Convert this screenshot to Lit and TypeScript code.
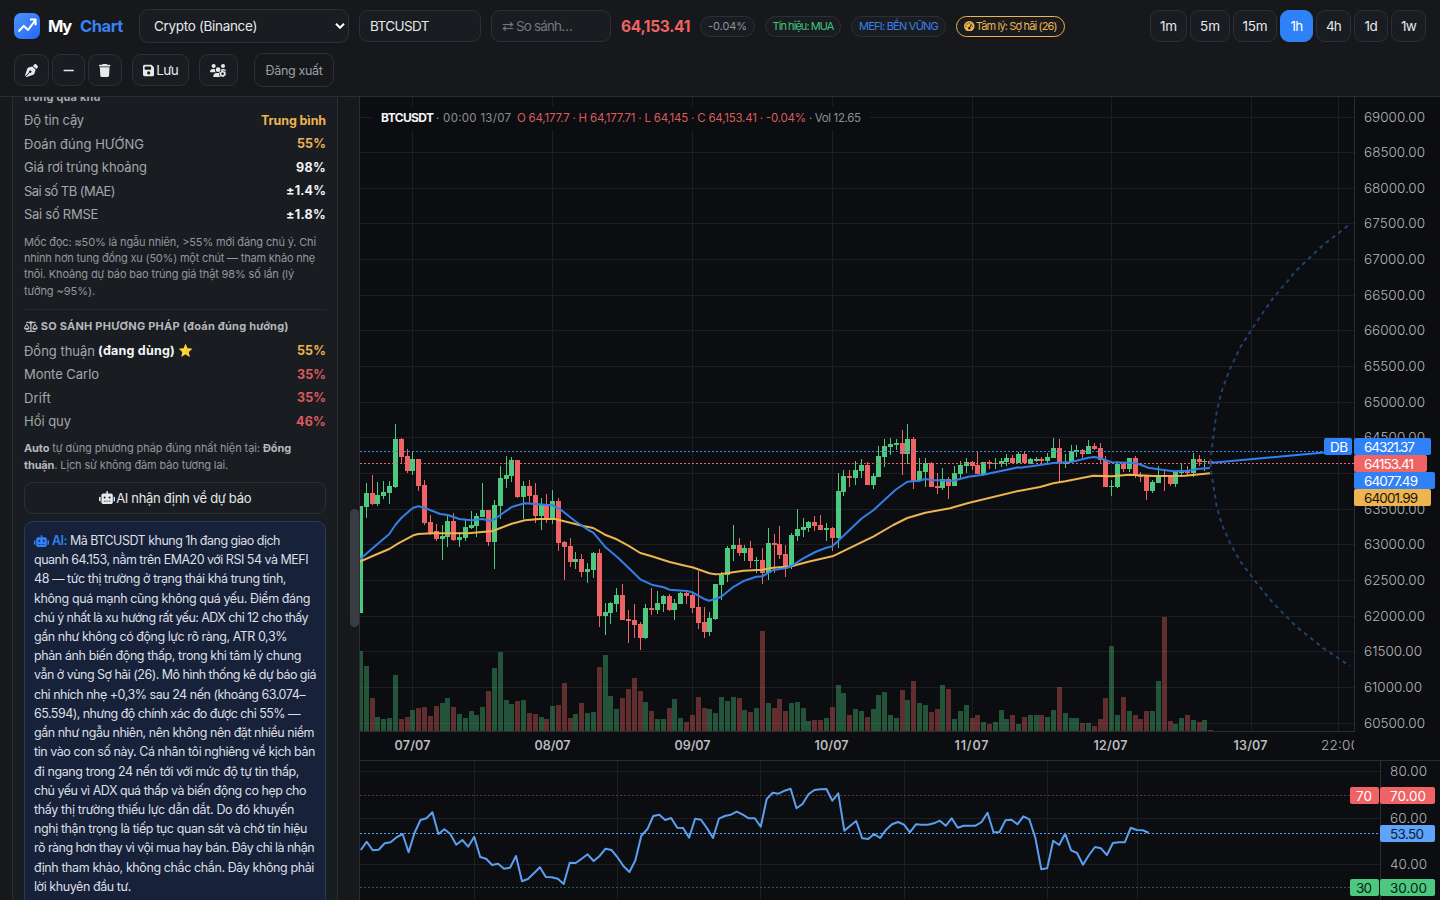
import { LitElement, html, svg, css } from 'lit';
import { customElement, property } from 'lit/decorators.js';

// direction, high, body top, body bottom, low, volume top (thirds of a pixel below y = 400)
const CANDLES = `
g318,318,638,638,753 g249,279,321,354,798 r225,279,311,315,894 g246,285,312,318,951 g243,276,288,297,957
g243,258,279,312,954 g72,117,261,264,825 r114,117,171,189,957 r147,168,213,219,951 g156,177,213,225,930
r177,177,258,273,924 r240,255,369,375,921 r345,366,399,405,948 r372,393,417,423,918 g375,408,417,480,909
g345,363,411,441,894 r339,363,420,423,921 g396,411,420,441,942 g360,381,414,423,954 g333,375,384,387,933
g339,348,378,411,945 g249,330,351,351,921 r330,330,426,438,873 g300,315,426,507,804 g198,234,318,357,756
g168,225,237,264,900 g171,180,228,246,912 r180,180,291,294,903 g243,258,291,357,900 r240,258,288,309,939
r249,285,348,369,942 g294,312,348,390,951 r282,312,357,369,957 g270,303,357,372,918 r294,303,429,453,915
r423,426,441,540,849 r414,438,486,501,954 g456,477,486,507,942 r462,477,516,531,909 g489,507,516,549,939
g456,459,510,534,936 r447,459,648,681,801 g609,636,648,705,765 g606,609,639,672,888 g564,585,612,636,927
r552,585,660,660,894 r630,657,663,729,867 r612,660,675,714,834 r666,672,714,750,873 g612,624,714,717,906
r564,624,630,645,933 g573,609,630,642,957 g585,588,612,636,957 r582,588,630,633,924 g597,609,630,660,897
g576,579,612,612,954 r576,579,588,612,966 r579,585,624,639,945 r513,621,669,687,891 r621,666,696,714,924
g636,654,696,708,927 g552,552,657,660,939 g516,525,555,600,891 g438,444,525,546,903 g375,435,447,483,891
r414,435,459,468,894 g435,444,459,483,930 r423,444,483,504,936 g471,480,483,519,924 r444,480,519,552,693
g384,429,519,540,909 r402,429,435,519,924 r378,432,465,477,897 r435,462,501,531,933 g399,405,501,507,909
g327,387,408,423,906 g354,381,390,411,924 g363,366,384,396,963 r348,366,378,393,960 r345,375,390,390,960
g369,384,390,423,954 r381,384,414,453,921 g219,273,414,444,855 g210,228,276,288,879 r210,228,234,261,945
g183,210,234,255,927 g177,195,213,234,933 r186,195,255,255,951 g219,228,255,267,927 g138,168,231,231,885
g117,138,171,201,876 g114,132,141,165,945 g117,129,135,150,954 r90,129,162,225,870 g72,117,162,192,900
r111,117,243,267,843 g174,213,243,246,909 g174,189,216,261,915 r186,189,261,261,936 r219,258,264,282,927
g204,237,264,270,855 r231,237,258,297,867 g198,219,258,258,957 g183,195,222,234,933 g174,186,198,219,915
r183,186,198,210,954 r156,195,222,222,945 g186,186,222,228,966 r180,186,192,207,972 g174,189,192,207,966
g174,183,192,201,930 g162,174,186,198,957 r165,174,189,189,945 g156,162,189,189,972 r156,162,189,192,951
g174,177,192,192,945 g171,177,183,186,945 r171,177,183,195,945 g159,171,183,189,951 g114,144,174,174,930
r117,144,189,249,861 g162,186,192,204,939 g135,153,186,189,954 g135,150,156,171,954 r147,150,162,174,969
g120,138,162,162,969 r129,138,147,150,978 r129,144,180,192,957 r168,180,261,261,894 g240,258,261,288,738
g183,192,261,264,945 r186,192,207,216,891 g174,174,207,216,933 r168,174,225,234,945 r216,228,231,246,957
r228,228,273,300,933 g240,246,273,279,933 g198,228,249,249,843 r210,228,231,273,651 r225,228,252,258,963
g213,216,252,261,972 g192,213,219,231,954 r198,213,219,225,945 g159,177,219,231,960 r165,177,186,198,966
g177,183,186,213,960 r183,183,189,189,990`.trim().split(/\s+/).map((c) => ({
  up: c[0] === 'g',
  v: c.slice(1).split(',').map((n) => 400 + Number(n) / 3),
}));

const RSI = [
  360, 335, 361, 359, 340, 337, 322, 312, 367, 309, 270, 265, 247, 312, 298, 312, 344, 330, 350, 320,
  381, 386, 405, 401, 416, 413, 378, 454, 447, 430, 412, 441, 442, 446, 462, 398, 399, 386, 373, 393,
  378, 356, 360, 382, 408, 426, 391, 317, 298, 258, 254, 270, 264, 293, 294, 323, 266, 269, 295, 324,
  266, 258, 254, 245, 254, 265, 265, 290, 207, 188, 191, 182, 176, 235, 222, 193, 180, 178, 177, 212,
  190, 302, 287, 273, 325, 327, 312, 324, 299, 283, 276, 284, 307, 283, 284, 284, 280, 272, 287, 265,
  293, 287, 287, 287, 276, 248, 307, 306, 271, 269, 283, 259, 268, 323, 418, 415, 332, 345, 311, 361,
  369, 404, 375, 351, 355, 375, 339, 337, 337, 293, 300, 301, 308,
];

// [x origin, points in thirds of a pixel]
type Segment = [number, string];

const EMA20: Segment[] = [
  [355, '15,478 50,447 103,402 121,375 139,354 173,324 190,319 208,323 256,342 278,345 313,357 350,361 383,357 404,363 420,357 436,345 470,321 490,315 510,310 540,312 593,316 612,325 660,363 700,390 715,398 750,440 790,474 856,538 890,554 926,562 944,569 994,573'],
  [690, '7,577 25,587 45,598 58,602 76,597 94,590 127,563 163,542 199,530 217,529 250,510 290,504 304,498 340,475 376,456 409,443 427,439 445,422 514,356 550,331 616,270 652,245 688,242 706,237 724,240 790,242 835,230 880,224 985,202'],
  [1020, '0,203 45,197 100,189 154,186 205,173 223,171 238,174 275,187 328,188 350,190 385,203 415,208 460,214 505,212 530,207 570,204'],
];

const EMA50: Segment[] = [
  [355, '15,485 60,465 103,447 130,430 175,406 190,402 230,400 340,400 413,393 470,371 510,361 553,357 600,357 640,367 685,378 715,384 750,404 785,418 820,437 856,459 890,469 944,486 994,498'],
  [690, '7,502 58,520 76,523 94,522 160,512 217,509 250,503 304,499 355,485 427,469 440,463 514,427 550,410 610,375 652,354 706,338 780,325 835,309 985,273'],
  [1020, '0,272 60,261 100,250 136,244 220,227 275,229 328,224 400,228 495,227 570,220'],
];

const toPoints = (segments: Segment[]) =>
  segments
    .map(([x0, pts]) =>
      pts.split(' ').map((p) => {
        const [x, y] = p.split(',').map(Number);
        return `${(x0 + x / 3).toFixed(1)},${(400 + y / 3).toFixed(1)}`;
      }).join(' ')
    )
    .join(' ');

const BAND = [
  [1210.5, 463], [1211.5, 474], [1213.3, 485], [1216.7, 507], [1221.7, 524], [1230, 543], [1240.7, 562],
  [1256.7, 583], [1271.7, 601.5], [1296.7, 627], [1323, 648], [1350, 666],
];

const DAYS: [string, number][] = [
  ['07/07', 412.5], ['08/07', 552.5], ['09/07', 692.5], ['10/07', 832.5], ['11/07', 972.5], ['12/07', 1111.5], ['13/07', 1251.5],
];

const ICONS: Record<string, [string, unknown]> = {
  nib: ['0 0 512 512', svg`<path d="M368.4 18.3L312.7 74.1 437.9 199.3l55.7-55.7c21.9-21.9 21.9-57.3 0-79.2L447.6 18.3c-21.9-21.9-57.3-21.9-79.2 0zM288 94.6l-9.2 2.8L134.7 140.6c-19.9 6-35.7 21.2-42.3 41L3.8 445.8c-3.8 11.3-1 23.9 7.3 32.4L164.7 324.7c-3-6.3-4.7-13.3-4.7-20.7c0-26.5 21.5-48 48-48s48 21.5 48 48s-21.5 48-48 48c-7.4 0-14.4-1.7-20.7-4.7L33.7 500.9c8.6 8.3 21.1 11.2 32.4 7.3l264.3-88.6c19.7-6.6 35-22.4 41-42.3l43.2-144.1 2.8-9.2L288 94.6z"/>`],
  minus: ['0 0 448 512', svg`<rect x="16" y="226" width="416" height="60" rx="30"/>`],
  trash: ['0 0 448 512', svg`<path d="M135.2 17.7L128 32H32C14.3 32 0 46.3 0 64S14.3 96 32 96H416c17.7 0 32-14.3 32-32s-14.3-32-32-32H320l-7.2-14.3C307.4 6.8 296.3 0 284.2 0H163.8c-12.1 0-23.2 6.8-28.6 17.7zM416 128H32L53.2 467c1.6 25.3 22.6 45 47.9 45H346.9c25.3 0 46.3-19.7 47.9-45L416 128z"/>`],
  save: ['0 0 448 512', svg`<path fill-rule="evenodd" d="M64 32C28.7 32 0 60.7 0 96V416c0 35.3 28.7 64 64 64H384c35.3 0 64-28.7 64-64V173.3c0-17-6.7-33.3-18.7-45.3L352 50.7C340 38.7 323.7 32 306.7 32H64zm0 96c0-17.7 14.3-32 32-32H288c17.7 0 32 14.3 32 32v64c0 17.7-14.3 32-32 32H96c-17.7 0-32-14.3-32-32V128zM224 288a64 64 0 1 1 0 128 64 64 0 1 1 0-128z"/>`],
  users: ['0 0 640 512', svg`<circle cx="144" cy="80" r="80"/><circle cx="512" cy="80" r="80"/><circle cx="320" cy="224" r="92"/>
    <path d="M0 299c0-59 48-107 107-107h42c16 0 31 4 45 10a128 128 0 0 0 35 118H21c-12 0-21-9-21-21zM446 202c14-6 29-10 45-10h42c59 0 107 48 107 90-40-30-90-40-130-20l-70 10c6-20 8-46 6-70zM128 485c0-74 60-133 133-133h104c-20 60 0 120 40 160H155c-15 0-27-12-27-27z"/>
    <circle cx="496" cy="384" r="82" fill="none" stroke="currentColor" stroke-width="60"/>
    <circle cx="496" cy="384" r="122" fill="none" stroke="currentColor" stroke-width="36" stroke-dasharray="66 62"/>`],
  scale: ['0 0 640 512', svg`<path fill-rule="evenodd" d="M384 32H512c18 0 32 14 32 32s-14 32-32 32H398c-5 26-23 47-46 57V448H512c18 0 32 14 32 32s-14 32-32 32H128c-18 0-32-14-32-32s14-32 32-32H288V153c-24-10-41-32-46-57H128c-18 0-32-14-32-32s14-32 32-32H256c15-19 38-32 64-32s49 13 64 32zM440 320H584L512 196zM512 416c-63 0-115-34-126-79-3-11 1-22 7-32L487 143c5-9 15-15 25-15s20 6 25 15l94 162c6 10 10 21 7 32-11 45-63 79-126 79zM127 196L54 320H199zM1 337c-3-11 1-22 7-32L102 143c5-9 15-15 25-15s20 6 25 15l94 162c6 10 10 21 7 32-11 45-63 79-126 79S12 382 1 337z"/>`],
  robot: ['0 0 640 512', svg`<path fill-rule="evenodd" d="M320 0c17.7 0 32 14.3 32 32V96H472c39.8 0 72 32.2 72 72V440c0 39.8-32.2 72-72 72H168c-39.8 0-72-32.2-72-72V168c0-39.8 32.2-72 72-72H288V32c0-17.7 14.3-32 32-32zM208 384c-8.8 0-16 7.2-16 16s7.2 16 16 16h32c8.8 0 16-7.2 16-16s-7.2-16-16-16H208zm96 0c-8.8 0-16 7.2-16 16s7.2 16 16 16h32c8.8 0 16-7.2 16-16s-7.2-16-16-16H304zm96 0c-8.8 0-16 7.2-16 16s7.2 16 16 16h32c8.8 0 16-7.2 16-16s-7.2-16-16-16H400zM264 256a40 40 0 1 0 -80 0 40 40 0 1 0 80 0zm152 40a40 40 0 1 0 0-80 40 40 0 1 0 0 80zM48 224H64V416H48c-26.5 0-48-21.5-48-48V272c0-26.5 21.5-48 48-48zm544 0c26.5 0 48 21.5 48 48v96c0 26.5-21.5 48-48 48H576V224h16z"/>`],
  gauge: ['0 0 512 512', svg`<circle cx="256" cy="256" r="256"/><g fill="#191b1e"><circle cx="256" cy="96" r="30"/><circle cx="144" cy="144" r="30"/><circle cx="96" cy="256" r="30"/><circle cx="416" cy="256" r="30"/><circle cx="256" cy="352" r="58"/><path d="M345 120l42 22-92 206-50-24z"/></g>`],
  logo: ['0 0 26 26', svg`<path d="M4.5 18.5l5.3-5.6 4.3 4 7-9.2M16 6.6h5.6v5.6" fill="none" stroke="#fff" stroke-width="2" stroke-linejoin="round"/>`],
  star: ['0 0 16 16', svg`<path d="M8 .8l2.1 4.8 5.2.5-3.9 3.5 1.1 5.2L8 12.1l-4.5 2.7 1.1-5.2L.7 6.1l5.2-.5z" fill="#ffd93b"/><path d="M8 .8l2.1 4.8 5.2.5-3.9 3.5 1.1 5.2L8 12.1z" fill="#fbc02d" opacity=".5"/>`],
  caret: ['0 0 10 8', svg`<path d="M1 1.8l4 4 4-4" fill="none" stroke="currentColor" stroke-width="2"/>`],
};

const icon = (name: string) =>
  html`<svg class="icon ${name}" viewBox=${ICONS[name][0]} fill="currentColor">${ICONS[name][1]}</svg>`;

// A single line of text whose tracking is adjusted to fill a given width.
@customElement('fit-text')
export class FitText extends LitElement {
  static styles = css`
    :host { display: inline-block; white-space: nowrap; }
  `;

  @property({ type: Number }) w = 0;

  firstUpdated() {
    const natural = this.getBoundingClientRect().width;
    const count = [...(this.textContent || '').trim()].length;
    this.style.letterSpacing = `${(this.w - natural) / count}px`;
  }

  render() {
    return html`<slot></slot>`;
  }
}

const fit = (text: string, w: number, cls = '') => html`<fit-text class=${cls} w=${w}>${text}</fit-text>`;

@customElement('price-chart')
export class PriceChart extends LitElement {
  static styles = css`
    :host { display: block; flex: 1; min-width: 0; background: #0b0d10; }
    .plot { display: block; width: 1080px; height: 803px; font-family: Inter, "Noto Sans", sans-serif; font-size: 13.5px; }
    .grid { stroke: #1c1f22; }
    .edge { stroke: #2a2d31; }
    .axis { fill: #b4b6b9; font-weight: 300; }
    .day { fill: #b9bbbe; font-size: 12.5px; font-weight: 600; }
    .up { fill: #4cc97f; }
    .down { fill: #f06365; }
    .vol { opacity: .38; }
    .line { fill: none; stroke-width: 2; stroke-linejoin: round; }
    .legend { font-size: 11.5px; }
    .gray { fill: #8b8f94; }
    .red { fill: #d95c5f; }
    .white { fill: #f4f5f6; font-weight: 700; font-size: 12px; }
  `;

  private text(t: string, x: number, y: number, w: number, cls: string, fill?: string) {
    return svg`<text class=${cls} x=${x} y=${y} textLength=${w} fill=${fill ?? 'inherit'}>${t}</text>`;
  }

  private tag(t: string, x: number, y: number, w: number, tw: number, bg: string, fg: string) {
    return svg`<rect x=${x} y=${y} width=${w} height="17" rx="2" fill=${bg}/>
      ${this.text(t, x + (w < 40 ? 6 : 10), y + 13.5, tw, '', fg)}`;
  }

  private candle(c: { up: boolean; v: number[] }, i: number) {
    const x = Math.floor(360.5 + 5.824 * i);
    const [high, top, bottom, low, vol] = c.v;
    const cls = c.up ? 'up' : 'down';
    return svg`
      <rect class="vol ${cls}" x=${x - 2} y=${vol} width="5" height=${731 - vol}/>
      <rect class=${cls} x=${x} y=${high} width="1" height=${low - high}/>
      <rect class=${cls} x=${x - 2} y=${Math.round(top)} width="5" height=${Math.max(1, Math.round(bottom) - Math.round(top))}/>`;
  }

  render() {
    const prices = Array.from({ length: 18 }, (_, k) => ({ label: `${69000 - 500 * k}.00`, y: Math.floor(117 + 35.65 * k) + 0.5 }));
    const rsi = RSI.map((v, i) => `${(360.8 + 5.969 * i).toFixed(1)},${(730 + v / 3).toFixed(1)}`).join(' ');
    const lower = BAND.map((p) => p.join(',')).join(' ');
    const upper = BAND.map(([x, y]) => `${x},${463 - (y - 463) * 1.177}`).join(' ');

    return html`
      <svg class="plot" viewBox="360 97 1080 803">
        ${prices.map((p) => svg`<line class="grid" x1="360" x2="1354" y1=${p.y} y2=${p.y}/>`)}
        ${[...DAYS.map((d) => d[1]), 1338.5].map((x) => svg`<line class="grid" x1=${x} x2=${x} y1="97" y2="731"/>`)}
        ${[771.5, 818.5, 864.5].map((y) => svg`<line class="grid" x1="360" x2="1380" y1=${y} y2=${y}/>`)}
        ${[474.5, 617.5, 760.5, 904.5, 1047.5, 1137.5].map((x) => svg`<line class="grid" x1=${x} x2=${x} y1="761" y2="900"/>`)}
        <path class="edge" d="M1354.5 97V731.5M360 731.5H1355M360 760.5H1440M1380.5 761V900"/>

        ${CANDLES.map((c, i) => this.candle(c, i))}

        <line x1="360" x2="1324" y1="451.5" y2="451.5" stroke="#3f86e8" stroke-dasharray="2 2"/>
        <line x1="360" x2="1354" y1="463.5" y2="463.5" stroke="#f06365" stroke-dasharray="2 2"/>
        <polyline class="line" stroke="#edb450" points=${toPoints(EMA50)}/>
        <polyline class="line" stroke="#327fe8" points=${toPoints(EMA20)}/>
        <polyline class="line" stroke="#2f81f7" points="1210,463 1324,452.5"/>
        <polyline class="line" stroke="#20426f" stroke-dasharray="4 4" points=${lower}/>
        <polyline class="line" stroke="#20426f" stroke-dasharray="4 4" points=${upper}/>

        ${prices.map((p, k) => this.text(p.label, 1364, p.y + 4.7, k === 16 || k === 15 ? 58 : 61, 'axis'))}
        ${this.tag('DB', 1324, 438, 28, 18, '#2f81f7', '#fff')}
        ${this.tag('64321.37', 1354, 438, 77, 51, '#2f81f7', '#fff')}
        ${this.tag('64153.41', 1354, 455, 73, 50, '#f06365', '#fff')}
        ${this.tag('64077.49', 1354, 472, 81, 54, '#2f81f7', '#fff')}
        ${this.tag('64001.99', 1354, 489, 77, 54, '#edb450', '#17150f')}

        ${DAYS.map(([d, x]) => this.text(d, x - 18, 749.7, d[0] === '1' ? 34 : 36, 'day'))}
        <svg x="1320" y="735" width="34" height="20"><text class="axis" x="1" y="15" textLength="38">22:00</text></svg>

        <line x1="360" x2="1350" y1="795.5" y2="795.5" stroke="#6b3439" stroke-dasharray="2 2"/>
        <line x1="360" x2="1380" y1="833.5" y2="833.5" stroke="#62a6f5" stroke-dasharray="2 2"/>
        <line x1="360" x2="1350" y1="887.5" y2="887.5" stroke="#285f47" stroke-dasharray="2 2"/>
        <polyline class="line" stroke="#5b9ff0" points=${rsi}/>
        ${this.text('80.00', 1390, 776, 37, 'axis')}
        ${this.text('60.00', 1390, 823, 37, 'axis')}
        ${this.text('40.00', 1390, 869, 37, 'axis')}
        ${this.tag('70', 1350, 787, 29, 16, '#f06365', '#fff')}
        ${this.tag('70.00', 1380, 787, 55, 36, '#f06365', '#fff')}
        ${this.tag('53.50', 1380, 825, 55, 34, '#5ea4fa', '#0d1a2a')}
        ${this.tag('30', 1350, 879, 29, 16, '#4cc97f', '#0c2013')}
        ${this.tag('30.00', 1380, 879, 55, 37, '#4cc97f', '#0c2013')}

        <rect x="372" y="106" width="498" height="24" rx="6" fill="#0b0d10"/>
        ${this.text('BTCUSDT', 381, 122, 53, 'legend white')}
        ${this.text('· 00:00 13/07', 436, 122, 75, 'legend gray')}
        ${this.text('O 64,177.7 · H 64,177.71 · L 64,145 · C 64,153.41 · -0.04%', 517, 122, 289, 'legend red')}
        ${this.text('· Vol 12.65', 809, 122, 52, 'legend gray')}
      </svg>
    `;
  }
}

@customElement('app-root')
export class AppRoot extends LitElement {
  static styles = css`
    :host {
      display: flex;
      flex-direction: column;
      width: 1440px;
      height: 900px;
      overflow: hidden;
      background: #0b0d10;
      color: #e6e8ea;
      font-family: Inter, "Noto Sans", sans-serif;
      font-size: 13px;
    }
    * { box-sizing: border-box; }
    .icon { display: block; flex: none; height: 12px; }
    header {
      height: 97px;
      padding: 9px 14px;
      background: #16181b;
      border-bottom: 1px solid #2a2d31;
      display: flex;
      flex-direction: column;
      gap: 10px;
      flex: none;
    }
    .bar { display: flex; align-items: center; height: 34px; }
    .mark { width: 26px; height: 26px; border-radius: 7px; background: linear-gradient(135deg, #4d94fb, #2767f2); }
    .mark .icon { height: 26px; }
    .name { display: flex; gap: 9px; width: 75px; margin: 0 16px 0 8px; font-size: 16.5px; font-weight: 700; color: #fff; }
    .name .accent { color: #3b82f0; }
    .field {
      display: flex;
      align-items: center;
      height: 32px;
      width: 122px;
      margin-right: 10px;
      padding: 0 10px;
      font-size: 13.5px;
      background: #191d21;
      border: 1px solid #2c3034;
      border-radius: 9px;
    }
    .select { width: 210px; height: 34px; padding: 0 3px 0 14px; justify-content: space-between; }
    .caret { width: 10px; height: 8px; color: #fff; }
    .compare { width: 120px; color: #74777b; }
    .price { font-size: 15.5px; font-weight: 700; color: #f06365; width: 69px; margin-right: 10px; }
    .pill {
      display: flex;
      align-items: center;
      justify-content: center;
      gap: 1px;
      height: 21px;
      margin-right: 10px;
      border: 1px solid #2c3034;
      border-radius: 11px;
      background: #191d21;
      font-size: 11px;
      color: #8f9296;
    }
    .change { width: 55px; }
    .signal { width: 76px; color: #40c37b; }
    .mefi { width: 95px; color: #3b7fe8; }
    .mood { width: 109px; color: #edb450; border-color: #edb450; background: #191b1e; }
    .gauge { height: 10.5px; }
    .frames { display: flex; gap: 3px; margin-left: auto; }
    .btn {
      display: flex;
      align-items: center;
      justify-content: center;
      gap: 2px;
      height: 32px;
      border: 1px solid #2c3034;
      border-radius: 9px;
      background: #191d21;
      font-size: 13.5px;
    }
    .frames .btn.on { background: #2f81f7; border-color: #2f81f7; color: #fff; }
    .w33 { width: 33px; }
    .w34 { width: 34px; }
    .w35 { width: 35px; }
    .w37 { width: 37px; }
    .w40 { width: 40px; }
    .w44 { width: 44px; }
    .tools { gap: 3px; }
    .tools .icon { height: 13px; }
    .keep { width: 57px; margin-left: 7px; }
    .team { width: 39px; margin-left: 7px; }
    .exit { width: 80px; height: 34px; margin-left: 13px; color: #9da0a4; font-size: 12.5px; background: #16181b; }

    main { display: flex; flex: 1; min-height: 0; }
    aside {
      width: 360px;
      flex: none;
      padding: 0 0 0 12px;
      background: #16181b;
      border-right: 1px solid #2a2d31;
      display: flex;
      justify-content: space-between;
      overflow: hidden;
    }
    .thumb { width: 9px; height: 118px; margin-top: 412px; border-radius: 5px; background: #393c43; }
    .panel {
      width: 326px;
      height: 830px;
      padding: 0 11px;
      background: #191d21;
      border: solid #2a2d31;
      border-width: 0 1px;
      color: #a4a7ab;
    }
    .cut { height: 11.5px; display: flex; align-items: flex-end; font-size: 11px; line-height: 18px; font-weight: 700; overflow: hidden; }
    .cut fit-text { margin-bottom: 3px; }
    .row { display: flex; justify-content: space-between; align-items: center; height: 23.5px; font-size: 13px; }
    .row .key { display: flex; gap: 3px; align-items: center; }
    .row .star { height: 15px; }
    .value { font-weight: 700; font-size: 12.5px; }
    .plain { color: #f4f5f6; }
    .warn { color: #edb450; }
    .bad { color: #dd5a5d; }
    .note { display: flex; flex-direction: column; align-items: flex-start; font-size: 11px; line-height: 16.4px; color: #94979b; }
    .note b { color: #b6b8bb; }
    .first { padding: 7.5px 0 10px; }
    .second { padding: 7px 0 9px; }
    .heading { display: flex; align-items: center; gap: 3px; height: 30px; padding-top: 3px; border-top: 1px solid #26292d; color: #b6b8bb; font-size: 11px; font-weight: 700; }
    .heading .icon { height: 11px; }
    .ask { height: 32px; margin-bottom: 7px; font-size: 13px; gap: 1px; color: #e6e8ea; }
    .ask .icon { height: 13px; }
    .answer {
      height: 400px;
      padding: 9px 9px;
      display: flex;
      flex-direction: column;
      align-items: flex-start;
      background: #17223a;
      border: 1px solid #243a61;
      border-radius: 9px;
      color: #dcdfe4;
      font-size: 12.5px;
      line-height: 19.22px;
    }
    .answer .lead { display: flex; align-items: center; gap: 3px; height: 19.22px; }
    .lead .icon, .lead .who { color: #2f81f7; }
    .lead .who { font-weight: 600; }
  `;

  private row(key: unknown, value: string, vw: number, tone: string) {
    return html`<div class="row"><span class="key">${key}</span>${fit(value, vw, `value ${tone}`)}</div>`;
  }

  render() {
    const frames: [string, number, number][] = [['1m', 37, 17], ['5m', 40, 20], ['15m', 44, 25], ['1h', 33, 12], ['4h', 35, 15], ['1d', 34, 13], ['1w', 35, 15]];
    const answer: [string, number][] = [
      ['quanh 64.153, nằm trên EMA20 với RSI 54 và MEFI', 274],
      ['48 — tức thị trường ở trạng thái khá trung tính,', 252],
      ['không quá mạnh cũng không quá yếu. Điểm đáng', 276],
      ['chú ý nhất là xu hướng rất yếu: ADX chỉ 12 cho thấy', 274],
      ['gần như không có động lực rõ ràng, ATR 0,3%', 253],
      ['phản ánh biến động thấp, trong khi tâm lý chung', 267],
      ['vẫn ở vùng Sợ hãi (26). Mô hình thống kê dự báo giá', 282],
      ['chỉ nhích nhẹ +0,3% sau 24 nến (khoảng 63.074–', 271],
      ['65.594), nhưng độ chính xác đo được chỉ 55% —', 266],
      ['gần như ngẫu nhiên, nên không nên đặt nhiều niềm', 280],
      ['tin vào con số này. Cá nhân tôi nghiêng về kịch bản', 281],
      ['đi ngang trong 24 nến tới với mức độ tự tin thấp,', 265],
      ['chủ yếu vì ADX quá thấp và biến động co hẹp cho', 272],
      ['thấy thị trường thiếu lực dẫn dắt. Do đó khuyến', 260],
      ['nghị thận trọng là tiếp tục quan sát và chờ tín hiệu', 273],
      ['rõ ràng hơn thay vì vội mua hay bán. Đây chỉ là nhận', 280],
      ['định tham khảo, không chắc chắn. Đây không phải', 280],
      ['lời khuyên đầu tư.', 97],
    ];

    return html`
      <header>
        <div class="bar">
          <div class="mark">${icon('logo')}</div>
          <div class="name">${fit('My', 23)}${fit('Chart', 43, 'accent')}</div>
          <div class="field select">${fit('Crypto (Binance)', 103)}${icon('caret')}</div>
          <div class="field">${fit('BTCUSDT', 59)}</div>
          <div class="field compare">${fit('⇄ So sánh…', 70)}</div>
          <div class="price">${fit('64,153.41', 69)}</div>
          <div class="pill change">${fit('-0.04%', 39)}</div>
          <div class="pill signal">${fit('Tín hiệu: MUA', 61)}</div>
          <div class="pill mefi">${fit('MEFI: BỀN VỮNG', 79)}</div>
          <div class="pill mood">${icon('gauge')}${fit('Tâm lý: Sợ hãi (26)', 81)}</div>
          <div class="frames">
            ${frames.map(([t, w, tw]) => html`<div class="btn w${w} ${t === '1h' ? 'on' : ''}">${fit(t, tw)}</div>`)}
          </div>
        </div>
        <div class="bar tools">
          <div class="btn w35">${icon('nib')}</div>
          <div class="btn w33">${icon('minus')}</div>
          <div class="btn w34">${icon('trash')}</div>
          <div class="btn keep">${icon('save')}${fit('Lưu', 22)}</div>
          <div class="btn team">${icon('users')}</div>
          <div class="btn exit">${fit('Đăng xuất', 57)}</div>
        </div>
      </header>
      <main>
        <aside>
          <div class="panel">
            <div class="cut">${fit('trong quá khứ', 77)}</div>
            ${this.row(fit('Độ tin cậy', 60), 'Trung bình', 65, 'warn')}
            ${this.row(fit('Đoán đúng HƯỚNG', 120), '55%', 29, 'warn')}
            ${this.row(fit('Giá rơi trúng khoảng', 123), '98%', 30, 'plain')}
            ${this.row(fit('Sai số TB (MAE)', 91), '±1.4%', 40, 'plain')}
            ${this.row(fit('Sai số RMSE', 74), '±1.8%', 40, 'plain')}
            <div class="note first">
              ${fit('Mốc đọc: ≈50% là ngẫu nhiên, >55% mới đáng chú ý. Chỉ', 292)}
              ${fit('nhỉnh hơn tung đồng xu (50%) một chút — tham khảo nhẹ', 291)}
              ${fit('thôi. Khoảng dự báo bao trúng giá thật 98% số lần (lý', 270)}
              ${fit('tưởng ~95%).', 71)}
            </div>
            <div class="heading">${icon('scale')}${fit('SO SÁNH PHƯƠNG PHÁP (đoán đúng hướng)', 248)}</div>
            ${this.row(html`${fit('Đồng thuận', 71)}${fit('(đang dùng)', 77, 'value plain')}${icon('star')}`, '55%', 29, 'warn')}
            ${this.row(fit('Monte Carlo', 75), '35%', 29, 'bad')}
            ${this.row(fit('Drift', 27), '35%', 29, 'bad')}
            ${this.row(fit('Hồi quy', 47), '46%', 30, 'bad')}
            <div class="note second">
              <fit-text w="267"><b>Auto</b> tự dùng phương pháp đúng nhất hiện tại: <b>Đồng</b></fit-text>
              <fit-text w="204"><b>thuận</b>. Lịch sử không đảm bảo tương lai.</fit-text>
            </div>
            <div class="btn ask">${icon('robot')}${fit('AI nhận định về dự báo', 135)}</div>
            <div class="answer">
              <div class="lead">${icon('robot')}${fit('AI:', 15, 'who')}${fit('Mã BTCUSDT khung 1h đang giao dịch', 210)}</div>
              ${answer.map(([t, w]) => fit(t, w))}
            </div>
          </div>
          <div class="thumb"></div>
        </aside>
        <price-chart></price-chart>
      </main>
    `;
  }
}
